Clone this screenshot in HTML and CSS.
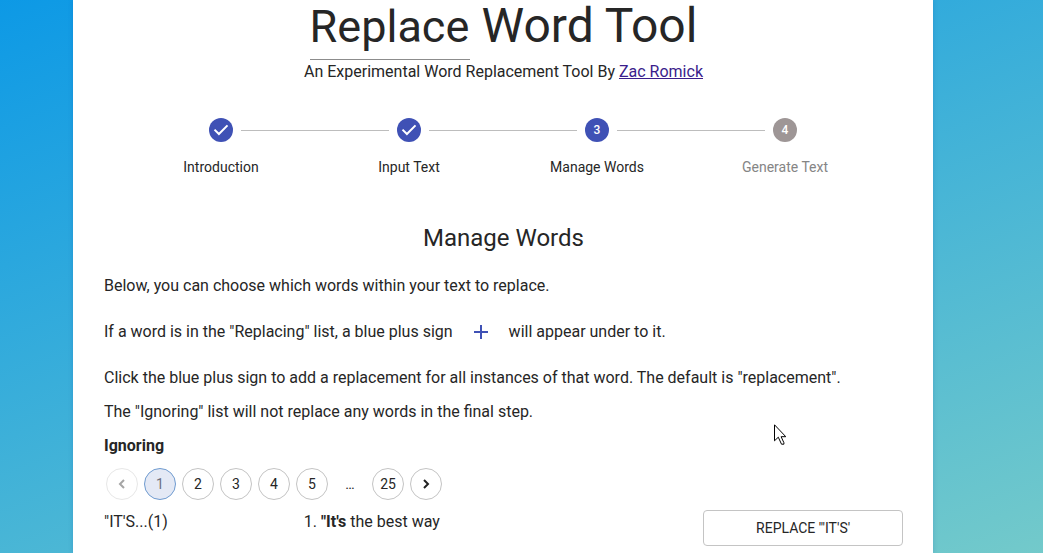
FILE: index.html
```html
<!DOCTYPE html>
<html lang="en">
<head>
<meta charset="utf-8">
<title>Replace Word Tool</title>
<link rel="stylesheet" href="styles.css">
</head>
<body>
<main class="card">
  <header class="header">
    <h1 class="title"><input class="title-input" type="text" value="Replace" aria-label="Title verb"><span>Word Tool</span></h1>
    <p class="subtitle">An Experimental Word Replacement Tool By <a class="author" href="#">Zac Romick</a></p>
  </header>
  <ol class="stepper">
    <li class="step">
      <svg class="step-icon" viewBox="0 0 24 24" aria-hidden="true"><circle cx="12" cy="12" r="12"/><path d="M5.5 11.6l4.4 4.4 8.6-8.6" fill="none" stroke="#fff" stroke-width="2"/></svg>
      <span class="step-label">Introduction</span>
    </li>
    <li class="step">
      <svg class="step-icon" viewBox="0 0 24 24" aria-hidden="true"><circle cx="12" cy="12" r="12"/><path d="M5.5 11.6l4.4 4.4 8.6-8.6" fill="none" stroke="#fff" stroke-width="2"/></svg>
      <span class="step-label">Input Text</span>
    </li>
    <li class="step">
      <span class="step-number">3</span>
      <span class="step-label">Manage Words</span>
    </li>
    <li class="step step-pending">
      <span class="step-number">4</span>
      <span class="step-label">Generate Text</span>
    </li>
  </ol>
  <h2 class="section-title">Manage Words</h2>
  <section class="intro">
    <p class="line">Below, you can choose which words within your text to replace.</p>
    <p class="line plus-line">If a word is in the "Replacing" list, a blue plus sign
      <svg class="plus" viewBox="0 0 24 24" role="img" aria-label="plus"><path d="M19 13h-6v6h-2v-6H5v-2h6V5h2v6h6z"/></svg>
      will appear under to it.</p>
    <p class="line">Click the blue plus sign to add a replacement for all instances of that word. The default is "replacement".</p>
    <p class="line">The "Ignoring" list will not replace any words in the final step.</p>
  </section>
  <h3 class="list-title">Ignoring</h3>
  <nav class="pagination" aria-label="Pages">
    <button class="page" type="button" disabled aria-label="Previous page"><svg class="chevron" viewBox="0 0 20 20"><path d="M12 6l-4 4 4 4"/></svg></button>
    <button class="page page-current" type="button" aria-current="page">1</button>
    <button class="page" type="button">2</button>
    <button class="page" type="button">3</button>
    <button class="page" type="button">4</button>
    <button class="page" type="button">5</button>
    <span class="ellipsis">…</span>
    <button class="page" type="button">25</button>
    <button class="page" type="button" aria-label="Next page"><svg class="chevron" viewBox="0 0 20 20"><path d="M8 6l4 4-4 4"/></svg></button>
  </nav>
  <div class="word-row">
    <span>"IT'S...(1)</span>
    <span>1. <b>"It's</b> the best way</span>
    <button class="replace" type="button">REPLACE '"IT'S'</button>
  </div>
</main>
<svg class="cursor" viewBox="0 0 12 21" aria-hidden="true"><path d="M.5.8v16l3.8-3.6 3.2 7h2.4v-1.5l-2.8-6h4.7z" fill="#fff" stroke="#000"/></svg>
</body>
</html>
```
FILE: styles.css
```css
* { box-sizing: border-box; }
html, body { min-height: 100%; }
html {
  background: linear-gradient(160deg, #0093e9 -110px, #80d0c7 990px) no-repeat fixed;
}
body {
  margin: 0;
  overflow: hidden;
  color: #262626;
  font: 16px/24px Roboto, sans-serif;
}
h1, h2, h3, p, ol { margin: 0; padding: 0; font-weight: 400; }
.card {
  min-height: 100vh;
  margin: 0 110px 0 73px;
  padding: 0 30px 0 31px;
  background: #fff;
  box-shadow: 0 0 5px rgba(0, 60, 160, .2);
}
.header { text-align: center; }
.title {
  display: flex;
  justify-content: center;
  align-items: baseline;
  gap: 12px;
  height: 60px;
  font-size: 48px;
  line-height: 48px;
}
.title-input {
  width: 160px;
  height: 60px;
  padding: 0 0 6px;
  border: 0;
  border-bottom: 1px solid #8c8c8c;
  background: none;
  color: inherit;
  font: 45px/52px Roboto, sans-serif;
  outline: 0;
}
.subtitle { line-height: 24px; }
.author { color: #3a1d8c; }
.stepper {
  display: flex;
  list-style: none;
  padding: 34px 24px 0 23px;
}
.step {
  position: relative;
  flex: 1;
  display: flex;
  flex-direction: column;
  align-items: center;
  gap: 15px;
  font-size: 14px;
  line-height: 20px;
}
.step + .step::before {
  content: "";
  position: absolute;
  top: 12px;
  left: calc(-50% + 20px);
  right: calc(50% + 20px);
  border-top: 1px solid #bdbdbd;
}
.step-icon { width: 24px; height: 24px; fill: #3f51b5; }
.step-number {
  width: 24px;
  border-radius: 50%;
  background: #3f51b5;
  color: #fff;
  font-size: 12px;
  line-height: 24px;
  font-weight: 500;
  text-align: center;
}
.step-pending .step-number { background: #9e9696; }
.step-pending .step-label { color: #858585; }
.section-title {
  margin-top: 45px;
  text-align: center;
  font-size: 24px;
  line-height: 32px;
}
.intro { padding-top: 15px; }
.line { line-height: 34px; }
.plus-line { display: flex; align-items: center; gap: 16px; padding: 12px 0; }
.plus { width: 24px; height: 24px; fill: #3f51b5; }
.list-title { font-size: 16px; line-height: 34px; font-weight: 700; }
.pagination { display: flex; gap: 6px; padding: 5px 2px; }
.page {
  width: 32px;
  height: 32px;
  padding: 0;
  border: 1px solid #c4c4c4;
  border-radius: 16px;
  background: #fff;
  color: #262626;
  font: 14px/20px Roboto, sans-serif;
}
.page:disabled { opacity: .4; }
.page-current { background: #e4e9f5; border-color: #6f9bd0; color: #6b7080; }
.chevron { display: block; width: 20px; height: 20px; margin: auto; fill: none; stroke: #212121; stroke-width: 2; }
.ellipsis { width: 32px; line-height: 32px; font-size: 14px; text-align: center; }
.word-row {
  display: grid;
  grid-template-columns: 1fr 2fr 1fr;
  align-items: start;
  padding-top: 5px;
}
.replace {
  height: 36px;
  border: 1px solid #c4c4c4;
  border-radius: 4px;
  background: #fff;
  color: #262626;
  font: 14px/24px Roboto, sans-serif;
}
.cursor { position: absolute; left: 774px; top: 424px; width: 12px; height: 21px; }
```
